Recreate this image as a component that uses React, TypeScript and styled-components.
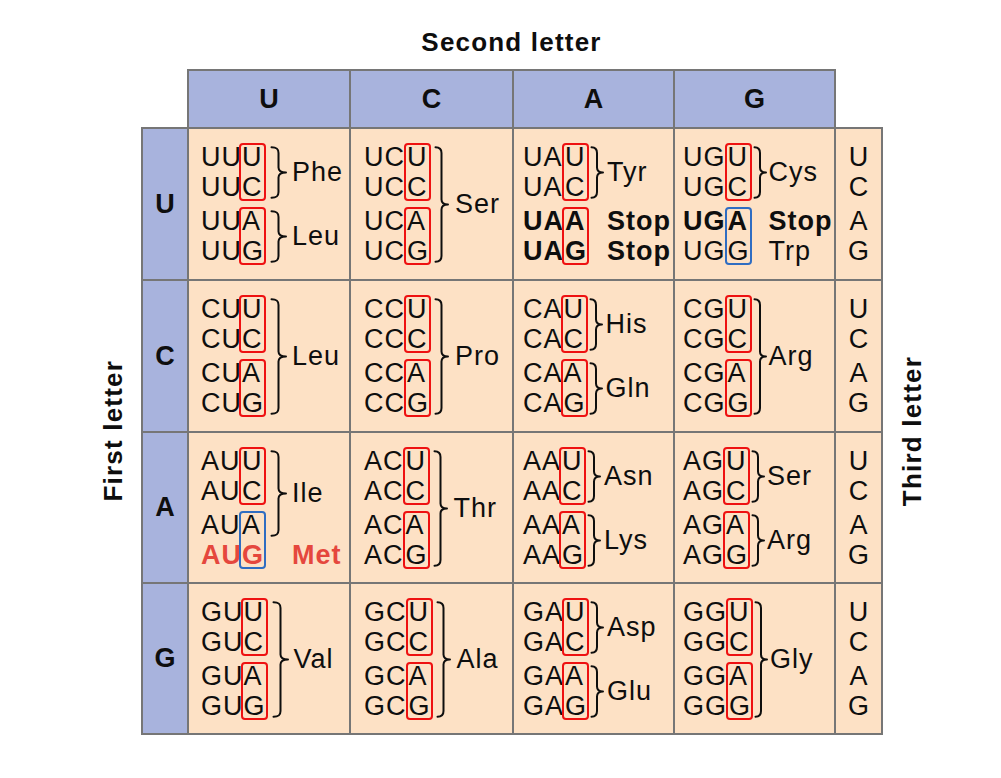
import React from 'react';
import styled, { createGlobalStyle } from 'styled-components';

const LINE = 30;
const PAIR_GAP = 4;
const BLUE = '#a8b3dd';
const PEACH = '#fde1c5';
const GRID = '#767676';
const RED_BOX = '#ee1111';
const BLUE_BOX = '#2f6dc2';
const RED_TEXT = '#e5473d';
const INK = '#0e0e0e';

const Global = createGlobalStyle`
  html, body { margin: 0; padding: 0; background: #ffffff; }
  body { font-family: "Liberation Sans", Arial, sans-serif; color: ${INK}; }
`;

const Page = styled.div`
  width: 1001px;
  height: 778px;
  box-sizing: border-box;
  padding: 24px 0 0 84px;
  overflow: hidden;
`;

const Chart = styled.div`
  display: grid;
  grid-template-columns: 58px 46px 162px 163px 161px 161px 47px 60px;
  grid-template-rows: 46px 58px 152px 152px 151px 151px;
`;

const Title = styled.div`
  grid-column: 3 / 7;
  grid-row: 1;
  align-self: start;
  text-align: center;
  font-weight: bold;
  font-size: 26px;
  letter-spacing: 1.2px;
  line-height: 36px;
`;

const SideLabel = styled.div<{ $col: number }>`
  grid-column: ${p => p.$col};
  grid-row: 3 / 7;
  place-self: center;
  writing-mode: vertical-rl;
  transform: rotate(180deg);
  font-weight: bold;
  font-size: 26px;
  letter-spacing: 1.2px;
`;

const Framed = styled.div<{ $col: number; $row: number }>`
  grid-column: ${p => p.$col};
  grid-row: ${p => p.$row};
  margin: -1px;
  border: 2px solid ${GRID};
  min-width: 0;
`;

const HeaderCell = styled(Framed)`
  background: ${BLUE};
  display: flex;
  align-items: center;
  justify-content: center;
  font-weight: bold;
  font-size: 27px;
`;

const ThirdCell = styled(Framed)`
  background: ${PEACH};
  display: flex;
  flex-direction: column;
  align-items: center;
  justify-content: center;
  font-size: 27px;
  line-height: ${LINE}px;
`;

const ThirdPair = styled.div`
  display: flex;
  flex-direction: column;
  align-items: center;
  & + & { margin-top: ${PAIR_GAP}px; }
`;

const Cell = styled(Framed)<{ $pad: number }>`
  background: ${PEACH};
  display: flex;
  align-items: center;
  padding-left: ${p => p.$pad}px;
  font-size: 27px;
  line-height: ${LINE}px;
  letter-spacing: 1px;
  white-space: nowrap;
`;

const CodonBlock = styled.div`
  display: flex;
`;

const Prefixes = styled.div`
  display: flex;
  flex-direction: column;
`;

const Line = styled.div<{ $bold?: boolean; $red?: boolean; $gapBefore?: boolean }>`
  height: ${LINE}px;
  margin-top: ${p => (p.$gapBefore ? PAIR_GAP : 0)}px;
  font-weight: ${p => (p.$bold ? 'bold' : 'normal')};
  color: ${p => (p.$red ? RED_TEXT : INK)};
`;

const ThirdCol = styled.div<{ $shift: number }>`
  display: flex;
  flex-direction: column;
  gap: ${PAIR_GAP}px;
  margin-left: ${p => p.$shift}px;
`;

const Box = styled.div<{ $color: string }>`
  box-sizing: border-box;
  height: ${LINE * 2 - 2}px;
  margin: 1px 0 1px -3px;
  padding-left: 1px;
  border: 2.5px solid ${p => p.$color};
  border-radius: 4px;
  display: flex;
  flex-direction: column;
  justify-content: center;
`;

const Labels = styled.div<{ $gap: number }>`
  display: flex;
  flex-direction: column;
  margin-left: ${p => p.$gap}px;
`;

const Group = styled.div<{ $h: number; $top: number }>`
  height: ${p => p.$h}px;
  margin-top: ${p => p.$top}px;
  display: flex;
  align-items: center;
`;

const BraceSlot = styled.div<{ $w: number }>`
  width: ${p => p.$w}px;
  align-self: stretch;
  display: flex;
  align-items: flex-start;
`;

const BraceSvg = styled.svg`
  display: block;
  margin-top: 4px;
`;

const Label = styled.span<{ $bold?: boolean; $red?: boolean; $gap: number }>`
  margin-left: ${p => p.$gap}px;
  font-weight: ${p => (p.$bold ? 'bold' : 'normal')};
  color: ${p => (p.$red ? RED_TEXT : INK)};
`;

function Brace({ h, w }: { h: number; w: number }) {
  const m = h / 2;
  const x = w * 0.5;
  const d = `M1.5 1.3 C${x - 2} 1.3 ${x} 2.8 ${x} 7 L${x} ${m - 5} C${x} ${m - 1.5} ${x + 2} ${m} ${w - 1} ${m} C${x + 2} ${m} ${x} ${m + 1.5} ${x} ${m + 5} L${x} ${h - 7} C${x} ${h - 2.8} ${x - 2} ${h - 1.3} 1.5 ${h - 1.3}`;
  return (
    <BraceSvg width={w} height={h} viewBox={`0 0 ${w} ${h}`}>
      <path d={d} fill="none" stroke={INK} strokeWidth={2} strokeLinecap="round" strokeLinejoin="round" />
    </BraceSvg>
  );
}

type G = { aa: string; n: number; brace: boolean; bold?: boolean; red?: boolean };

const BASES = ['U', 'C', 'A', 'G'];

const groups: Record<string, G[]> = {
  UU: [{ aa: 'Phe', n: 2, brace: true }, { aa: 'Leu', n: 2, brace: true }],
  UC: [{ aa: 'Ser', n: 4, brace: true }],
  UA: [
    { aa: 'Tyr', n: 2, brace: true },
    { aa: 'Stop', n: 1, brace: false, bold: true },
    { aa: 'Stop', n: 1, brace: false, bold: true },
  ],
  UG: [
    { aa: 'Cys', n: 2, brace: true },
    { aa: 'Stop', n: 1, brace: false, bold: true },
    { aa: 'Trp', n: 1, brace: false },
  ],
  CU: [{ aa: 'Leu', n: 4, brace: true }],
  CC: [{ aa: 'Pro', n: 4, brace: true }],
  CA: [{ aa: 'His', n: 2, brace: true }, { aa: 'Gln', n: 2, brace: true }],
  CG: [{ aa: 'Arg', n: 4, brace: true }],
  AU: [{ aa: 'Ile', n: 3, brace: true }, { aa: 'Met', n: 1, brace: false, bold: true, red: true }],
  AC: [{ aa: 'Thr', n: 4, brace: true }],
  AA: [{ aa: 'Asn', n: 2, brace: true }, { aa: 'Lys', n: 2, brace: true }],
  AG: [{ aa: 'Ser', n: 2, brace: true }, { aa: 'Arg', n: 2, brace: true }],
  GU: [{ aa: 'Val', n: 4, brace: true }],
  GC: [{ aa: 'Ala', n: 4, brace: true }],
  GA: [{ aa: 'Asp', n: 2, brace: true }, { aa: 'Glu', n: 2, brace: true }],
  GG: [{ aa: 'Gly', n: 4, brace: true }],
};

const blueBottom = new Set(['UG', 'AU']);

const COLS = [
  { pad: 12, shift: 0, gap: 4, braceW: 17, labelGap: 5 },
  { pad: 13, shift: 2, gap: 3, braceW: 15, labelGap: 6 },
  { pad: 9, shift: 1, gap: 1, braceW: 14, labelGap: 3 },
  { pad: 8, shift: 2, gap: 1, braceW: 14, labelGap: 2 },
];

function lineStyles(gs: G[]) {
  const out: { bold?: boolean; red?: boolean }[] = [];
  gs.forEach(g => {
    for (let i = 0; i < g.n; i++) out.push({ bold: g.bold, red: g.red });
  });
  return out;
}

function CodonCell({ first, second, col, row }: { first: string; second: string; col: number; row: number }) {
  const key = first + second;
  const gs = groups[key];
  const styles = lineStyles(gs);
  const cfg = COLS[col];
  const pairs = [
    [0, 1],
    [2, 3],
  ];
  let start = 0;
  const placed = gs.map(g => {
    const s = start;
    const e = s + g.n - 1;
    start += g.n;
    const h = g.n * LINE + (s <= 1 && e >= 2 ? PAIR_GAP : 0);
    const top = s === 2 ? PAIR_GAP : 0;
    return { g, h, top };
  });
  return (
    <Cell $col={col + 3} $row={row + 3} $pad={cfg.pad}>
      <CodonBlock>
        <Prefixes>
          {BASES.map((b, i) => (
            <Line key={b} $bold={styles[i].bold} $red={styles[i].red} $gapBefore={i === 2}>
              {key}
            </Line>
          ))}
        </Prefixes>
        <ThirdCol $shift={cfg.shift}>
          {pairs.map((pair, pi) => (
            <Box key={pi} $color={pi === 1 && blueBottom.has(key) ? BLUE_BOX : RED_BOX}>
              {pair.map(i => (
                <Line key={i} $bold={styles[i].bold} $red={styles[i].red}>
                  {BASES[i]}
                </Line>
              ))}
            </Box>
          ))}
        </ThirdCol>
      </CodonBlock>
      <Labels $gap={cfg.gap}>
        {placed.map(({ g, h, top }, gi) => (
          <Group key={gi} $h={h} $top={top}>
            <BraceSlot $w={cfg.braceW}>{g.brace && <Brace h={h - 7} w={cfg.braceW} />}</BraceSlot>
            <Label $bold={g.bold} $red={g.red} $gap={cfg.labelGap}>
              {g.aa}
            </Label>
          </Group>
        ))}
      </Labels>
    </Cell>
  );
}

export default function App() {
  return (
    <>
      <Global />
      <Page>
        <Chart>
          <Title>Second letter</Title>
          {BASES.map((b, i) => (
            <HeaderCell key={'h' + b} $col={i + 3} $row={2}>
              {b}
            </HeaderCell>
          ))}
          <SideLabel $col={1}>First letter</SideLabel>
          <SideLabel $col={8}>Third letter</SideLabel>
          {BASES.map((f, r) => (
            <React.Fragment key={'r' + f}>
              <HeaderCell $col={2} $row={r + 3}>
                {f}
              </HeaderCell>
              {BASES.map((s, c) => (
                <CodonCell key={f + s} first={f} second={s} col={c} row={r} />
              ))}
              <ThirdCell $col={7} $row={r + 3}>
                <ThirdPair>
                  <div>U</div>
                  <div>C</div>
                </ThirdPair>
                <ThirdPair>
                  <div>A</div>
                  <div>G</div>
                </ThirdPair>
              </ThirdCell>
            </React.Fragment>
          ))}
        </Chart>
      </Page>
    </>
  );
}
